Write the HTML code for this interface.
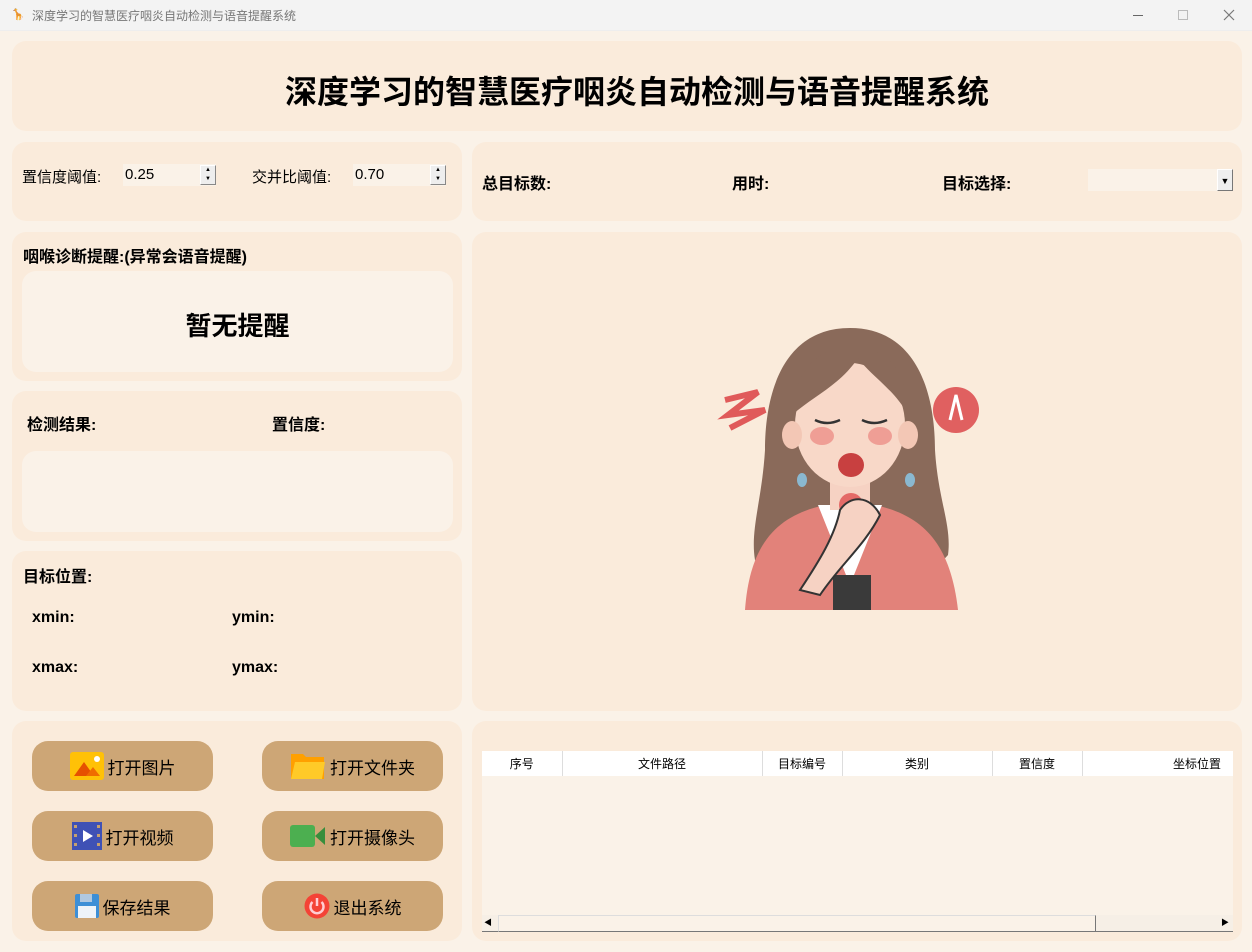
<!DOCTYPE html>
<html><head><meta charset="utf-8"><style>
*{margin:0;padding:0;box-sizing:border-box}
body{width:1252px;height:952px;background:#faf2e8;font-family:"Liberation Sans","Noto Sans CJK SC",sans-serif;position:relative;overflow:hidden;color:#000}
.a{position:absolute}
.p{position:absolute;background:#faebdb;border-radius:14px}
.in{position:absolute;background:#faf2e8;border-radius:14px}
.b{font-weight:bold}
.btn{position:absolute;width:181px;height:50px;background:#cda676;border-radius:16px;display:flex;align-items:center;justify-content:center;font-size:17px;gap:4px}
.sp{position:absolute;width:93px;height:22px;background:#faf2e8;font-size:15px;padding:2px 0 0 2px}
.sp i{position:absolute;right:0;top:1px;width:16px;height:20px;border:1px solid #888;border-top-color:#fff;border-left-color:#fff;background:#eee;font-style:normal;font-size:6px;line-height:9px;text-align:center}
th{font-weight:normal;font-size:12px;height:25px;border-right:1px solid #ddd}
</style></head><body>
<div class="a" style="left:0;top:0;width:1252px;height:31px;background:#f3f3f3;border-bottom:1px solid #eee"></div>
<div class="a" style="left:11px;top:8px;width:14px;height:14px;color:#e77;font-size:11px">🦒</div>
<div class="a" style="left:32px;top:7px;font-size:12px;color:#777">深度学习的智慧医疗咽炎自动检测与语音提醒系统</div>
<div class="a" style="left:1133px;top:15px;width:10px;height:1px;background:#666"></div>
<div class="a" style="left:1178px;top:10px;width:10px;height:10px;border:1px solid #bbb"></div>
<svg class="a" style="left:1223px;top:9px" width="12" height="12"><path d="M1 1L11 11M11 1L1 11" stroke="#777" stroke-width="1.2"/></svg>

<div class="p" style="left:12px;top:41px;width:1230px;height:90px"></div>
<div class="a b" style="left:0;width:1274px;top:67px;text-align:center;font-size:32px">深度学习的智慧医疗咽炎自动检测与语音提醒系统</div>

<div class="p" style="left:12px;top:142px;width:450px;height:79px"></div>
<div class="a" style="left:22px;top:166px;font-size:15px">置信度阈值:</div>
<div class="sp" style="left:123px;top:164px">0.25<i>▲<br>▼</i></div>
<div class="a" style="left:252px;top:166px;font-size:15px">交并比阈值:</div>
<div class="sp" style="left:353px;top:164px">0.70<i>▲<br>▼</i></div>

<div class="p" style="left:472px;top:142px;width:770px;height:79px"></div>
<div class="a b" style="left:482px;top:170px;font-size:16px">总目标数:</div>
<div class="a b" style="left:732px;top:170px;font-size:16px">用时:</div>
<div class="a b" style="left:942px;top:170px;font-size:16px">目标选择:</div>
<div class="a" style="left:1088px;top:169px;width:145px;height:22px;background:#faf2e8"></div>
<div class="a" style="left:1217px;top:169px;width:16px;height:22px;border:1px solid #777;border-top-color:#fff;border-left-color:#fff;background:#eee;font-size:9px;text-align:center;line-height:22px">▼</div>

<div class="p" style="left:12px;top:232px;width:450px;height:149px"></div>
<div class="a b" style="left:23px;top:243px;font-size:16px">咽喉诊断提醒:(异常会语音提醒)</div>
<div class="in" style="left:22px;top:271px;width:431px;height:101px"></div>
<div class="a b" style="left:22px;width:431px;top:306px;text-align:center;font-size:26px">暂无提醒</div>

<div class="p" style="left:12px;top:391px;width:450px;height:150px"></div>
<div class="a b" style="left:27px;top:411px;font-size:16px">检测结果:</div>
<div class="a b" style="left:272px;top:411px;font-size:16px">置信度:</div>
<div class="in" style="left:22px;top:451px;width:431px;height:81px"></div>

<div class="p" style="left:12px;top:551px;width:450px;height:160px"></div>
<div class="a b" style="left:23px;top:563px;font-size:16px">目标位置:</div>
<div class="a b" style="left:32px;top:609px;font-size:16px">xmin:</div>
<div class="a b" style="left:232px;top:609px;font-size:16px">ymin:</div>
<div class="a b" style="left:32px;top:659px;font-size:16px">xmax:</div>
<div class="a b" style="left:232px;top:659px;font-size:16px">ymax:</div>

<div class="p" style="left:472px;top:232px;width:770px;height:479px"></div>
<svg class="a" style="left:700px;top:320px" width="300" height="300" viewBox="0 0 300 300">
<path d="M150 8 C85 8 65 70 65 130 C62 180 50 210 55 240 L75 260 L225 260 L248 235 C252 205 238 180 235 130 C235 70 215 8 150 8Z" fill="#8a6a5a"/>
<path d="M45 290 C50 220 80 195 125 185 L175 185 C220 195 250 220 258 290Z" fill="#e2827a"/>
<path d="M118 185 L150 265 L182 185Z" fill="#fff"/>
<rect x="133" y="255" width="38" height="35" fill="#3a3a3a"/>
<rect x="130" y="140" width="40" height="50" fill="#f6d2c3"/>
<circle cx="151" cy="185" r="12" fill="#e05050" opacity=".8"/>
<ellipse cx="150" cy="105" rx="55" ry="62" fill="#f8d8c8"/>
<path d="M92 95 C95 40 130 25 150 28 C180 25 208 45 208 95 C195 70 170 55 158 38 C140 65 115 75 92 95Z" fill="#8a6a5a"/>
<ellipse cx="92" cy="115" rx="10" ry="14" fill="#f3c7b5"/><ellipse cx="208" cy="115" rx="10" ry="14" fill="#f3c7b5"/>
<ellipse cx="122" cy="116" rx="12" ry="9" fill="#ef9e95"/><ellipse cx="180" cy="116" rx="12" ry="9" fill="#ef9e95"/>
<path d="M115 100 q12 6 25 0 M162 100 q12 6 25 0" stroke="#333" stroke-width="2.5" fill="none"/>
<ellipse cx="151" cy="145" rx="13" ry="12" fill="#c84040"/>
<path d="M140 190 C135 215 120 240 100 270 L120 275 C140 245 165 225 180 195 C170 175 150 175 140 190Z" fill="#f6d2c3" stroke="#333" stroke-width="2"/>
<path d="M25 80 L58 72 L28 95 L65 90 L30 108" stroke="#e05a5a" stroke-width="6" fill="none" stroke-linejoin="miter"/>
<circle cx="256" cy="90" r="23" fill="#e06060"/>
<path d="M250 100 l6-25 l6 25" stroke="#fff" stroke-width="3" fill="none"/>
<ellipse cx="102" cy="160" rx="5" ry="7" fill="#8ab8d0"/><ellipse cx="210" cy="160" rx="5" ry="7" fill="#8ab8d0"/>
</svg>

<div class="p" style="left:12px;top:721px;width:450px;height:220px"></div>
<div class="btn" style="left:32px;top:741px"><svg width="34" height="28"><rect width="34" height="28" rx="3" fill="#ffc107"/><path d="M4 24 L14 10 L24 24Z" fill="#e65100"/><path d="M16 24 L23 15 L30 24Z" fill="#ef6c00"/><circle cx="27" cy="7" r="3" fill="#fff"/></svg>打开图片</div>
<div class="btn" style="left:262px;top:741px"><svg width="36" height="28"><path d="M1 2 h12 l3 3 h18 v22 h-33z" fill="#ffa000"/><path d="M5 10 h30 l-3 17 h-31z" fill="#ffca28"/></svg>打开文件夹</div>
<div class="btn" style="left:32px;top:811px"><svg width="30" height="28"><rect width="30" height="28" fill="#3f51b5"/><path d="M11 8 L21 14 L11 20Z" fill="#fff"/><g fill="#c5a070"><rect x="2" y="3" width="3" height="3"/><rect x="2" y="12" width="3" height="3"/><rect x="2" y="21" width="3" height="3"/><rect x="25" y="3" width="3" height="3"/><rect x="25" y="12" width="3" height="3"/><rect x="25" y="21" width="3" height="3"/></g></svg>打开视频</div>
<div class="btn" style="left:262px;top:811px"><svg width="36" height="24"><rect y="1" width="25" height="22" rx="3" fill="#4caf50"/><path d="M25 12 L35 3 V21Z" fill="#388e3c"/></svg>打开摄像头</div>
<div class="btn" style="left:32px;top:881px"><svg width="24" height="24"><rect width="24" height="24" rx="2" fill="#3d8fd6"/><rect x="5" y="0" width="12" height="8" fill="#b0c8e0"/><rect x="3" y="12" width="18" height="12" fill="#eef3f8"/></svg>保存结果</div>
<div class="btn" style="left:262px;top:881px"><svg width="26" height="26"><circle cx="13" cy="13" r="12.5" fill="#f44336"/><path d="M8.5 9 A6.5 6.5 0 1 0 17.5 9" stroke="#ffcdd2" stroke-width="2.5" fill="none"/><path d="M13 5 v8" stroke="#ffcdd2" stroke-width="2.5"/></svg>退出系统</div>

<div class="p" style="left:472px;top:721px;width:770px;height:220px"></div>
<table class="a" style="left:482px;top:751px;width:751px;background:#fff;border-collapse:collapse"><tr>
<th style="width:80px">序号</th><th style="width:200px">文件路径</th><th style="width:80px">目标编号</th><th style="width:150px">类别</th><th style="width:90px">置信度</th><th style="text-align:right;padding-right:12px;border:0">坐标位置</th></tr></table>
<div class="a" style="left:482px;top:776px;width:751px;height:139px;background:#faf2e8"></div>
<div class="a" style="left:482px;top:915px;width:751px;height:17px;background:#f6efe6;border-bottom:1px solid #777"></div>
<div class="a" style="left:498px;top:915px;width:598px;height:17px;background:#faf2e8;border:1px solid #ddd;border-right-color:#777;border-bottom-color:#777"></div>
<div class="a" style="left:484px;top:917px;font-size:8px">◀</div>
<div class="a" style="left:1221px;top:917px;font-size:8px">▶</div>
</body></html>
